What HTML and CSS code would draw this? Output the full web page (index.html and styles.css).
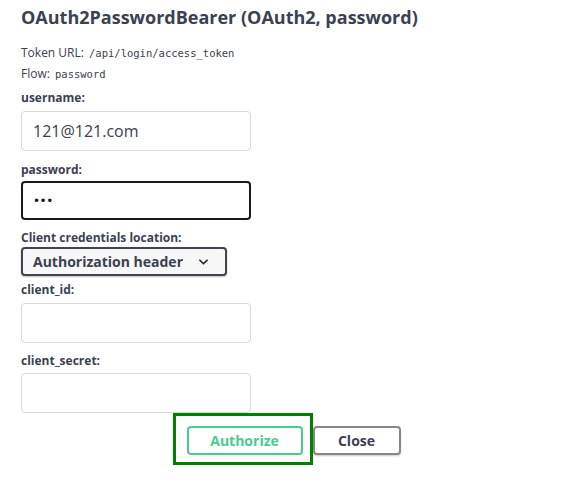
FILE: index.html
```html
<!DOCTYPE html>
<html>
<head>
<meta charset="utf-8">
<link rel="stylesheet" href="styles.css">
</head>
<body>
<div class="auth">
  <h4 class="title">OAuth2PasswordBearer (OAuth2, password)</h4>
  <p class="meta first">Token URL: <code>/api/login/access_token</code></p>
  <p class="meta">Flow: <code>password</code></p>

  <label class="lbl l-user">username:</label>
  <div class="field">121@121.com</div>

  <label class="lbl l-pass">password:</label>
  <div class="field focus"><span class="dots">•••</span></div>

  <label class="lbl l-loc">Client credentials location:</label>
  <div class="select">
    <span>Authorization header</span>
    <svg class="chev" width="10" height="6" viewBox="0 0 10 6"><path d="M1 1l4 4 4-4" fill="none" stroke="#1f2330" stroke-width="1.8" stroke-linecap="round" stroke-linejoin="round"/></svg>
  </div>

  <label class="lbl l-id">client_id:</label>
  <div class="field"></div>

  <label class="lbl l-secret">client_secret:</label>
  <div class="field"></div>

  <div class="actions">
    <button class="btn authorize">Authorize</button>
    <button class="btn close">Close</button>
  </div>
</div>
</body>
</html>
```

FILE: styles.css
```css
html, body {
  margin: 0;
  padding: 0;
  background: #fff;
}
body {
  font-family: "Open Sans", "Noto Sans", sans-serif;
  color: #3b4151;
  width: 574px;
  height: 482px;
  overflow: hidden;
}
.auth {
  padding-left: 21px;
  display: flex;
  flex-direction: column;
  align-items: flex-start;
}
.title {
  margin: 6px 0 0 0;
  font-size: 18px;
  line-height: 22px;
  font-weight: 700;
  color: #3b4151;
}
.meta {
  margin: 0;
  font-size: 12px;
  line-height: 16px;
  color: #3b4151;
}
.meta.first { margin-top: 17px; }
.meta + .meta { margin-top: 5px; }
code {
  font-family: "DejaVu Sans Mono", "Liberation Mono", monospace;
  font-size: 10.5px;
  padding: 0 2px;
  color: #3b4151;
}
.lbl {
  display: block;
  font-size: 12px;
  line-height: 16px;
  font-weight: 700;
  color: #3b4151;
}
.l-user { margin-top: 8px; margin-bottom: 5px; }
.l-pass { margin-top: 11px; margin-bottom: 3px; }
.l-loc { margin-top: 10px; margin-bottom: 1px; }
.l-id { margin-top: 6px; margin-bottom: 5px; }
.l-secret { margin-top: 10px; margin-bottom: 4px; }
.field {
  box-sizing: border-box;
  width: 230px;
  height: 40px;
  border: 1px solid #d9d9d9;
  border-radius: 4px;
  padding: 0 11px;
  display: flex;
  align-items: center;
  font-size: 16px;
  color: #3b4151;
}
.field.focus {
  height: 39px;
  border: 2px solid #1b1b1b;
  padding: 0 10px;
}
.dots {
  font-size: 12px;
  letter-spacing: -0.5px;
  color: #1b1b1b;
  font-family: "DejaVu Sans", sans-serif;
}
.select {
  box-sizing: border-box;
  width: 206px;
  height: 29px;
  border: 2px solid #41444e;
  border-radius: 4px;
  background: #f7f7f7;
  box-shadow: 0 1px 2px rgba(0,0,0,0.25);
  display: flex;
  align-items: center;
  padding: 0 0 0 10px;
  font-size: 14px;
  font-weight: 700;
  color: #3b4151;
}
.chev {
  margin-left: 16px;
  width: 9px;
}
.actions {
  align-self: stretch;
  display: flex;
  justify-content: center;
  padding-right: 8px;
  margin-top: 13px;
  gap: 10px;
}
.btn {
  box-sizing: border-box;
  height: 29px;
  border-radius: 4px;
  background: #fff;
  font-family: "Open Sans", sans-serif;
  font-size: 14px;
  font-weight: 700;
  padding: 0;
  cursor: pointer;
}
.authorize {
  position: relative;
  width: 116px;
  border: 2px solid #49cc90;
  color: #49cc90;
}
.authorize::after {
  content: "";
  position: absolute;
  left: -16px;
  top: -15px;
  right: -12px;
  bottom: -12px;
  border: 3px solid #008000;
}
.close {
  width: 88px;
  border: 2px solid #888;
  color: #3b4151;
  box-shadow: 0 1px 2px rgba(0,0,0,0.2);
}
```
